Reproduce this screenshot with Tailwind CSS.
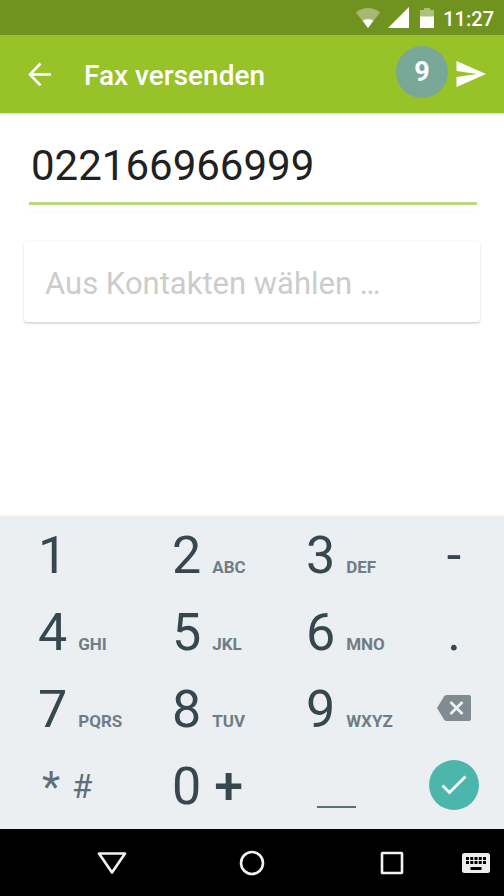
<!DOCTYPE html>
<html lang="de">
<head>
<meta charset="utf-8">
<meta name="viewport" content="width=device-width, initial-scale=1">
<title>Fax versenden</title>
<script src="https://cdn.jsdelivr.net/npm/@tailwindcss/browser@4"></script>
</head>
<body class="flex min-h-screen flex-col bg-white font-['Roboto',sans-serif]">
<div class="flex h-[35px] items-center justify-end bg-[#70921f] pr-[10px] text-white">
  <svg class="mr-2 h-5 w-6" viewBox="0 0 24 20" role="img" aria-label="WLAN"><path d="M12 20 0 4.500Q5 0 12 0T24 4.500Z" fill="#a5b973"/><path d="M12 20 6.500 12.500Q12 9.500 17.500 12.500Z" fill="#fff"/></svg>
  <svg class="mr-[11px] h-[21px] w-[21px]" viewBox="0 0 21 21" role="img" aria-label="Mobilfunk"><path d="M21 0V21H0Z" fill="#fff"/></svg>
  <svg class="mr-[9px] h-5 w-[14px]" viewBox="0 0 14 20" role="img" aria-label="Akku"><path d="M0 2H4V0H10V2H14V9H0Z" fill="#adc07e"/><path d="M0 8.500H14V20H0Z" fill="#fff"/></svg>
  <span class="pt-[3px] text-[20px] leading-6 font-medium">11:27</span>
</div>
<header class="flex h-[78px] items-center bg-[#97c228] pr-[18px] pl-7 text-white shadow-[0_1px_2px_#00000033]">
  <button type="button" aria-label="Zurück" class="mr-8 shrink-0"><svg class="h-6 w-6" viewBox="0 0 24 24" fill="none" stroke="#fff" stroke-width="2.600"><path d="M23 12.500H2.500M12.500 1.500 2 12.500 12.500 23.500"/></svg></button>
  <h1 class="flex-1 pt-1 text-[28px] leading-8 font-medium">Fax versenden</h1>
  <span class="mr-2 mb-1 flex h-[52px] w-[52px] items-center justify-center rounded-full bg-[#79a898] text-[27px] leading-8 font-bold">9</span>
  <button type="button" aria-label="Senden"><svg class="h-[26px] w-[30px]" viewBox="0 0 30 26"><path d="M0.500 0 30 13 0.500 26V16L21 13 0.500 10Z" fill="#fff"/></svg></button>
</header>
<main class="flex-1 px-6 pt-5">
  <div class="mr-[3px] ml-[5px]">
    <input type="tel" aria-label="Faxnummer" value="022166966999" class="block h-[72px] w-full border-b-[3px] border-[#bdd880] pr-0 pb-1 pl-[2px] text-[42px] leading-[50px] text-[#212121] outline-none">
    <div class="mt-[6px] h-px bg-[#fafafa]"></div>
  </div>
  <button type="button" class="mt-[29px] block h-[81px] w-full rounded-[3px] bg-white pt-[5px] pl-[21px] text-left text-[31px] leading-9 text-[#cccccc] shadow-[0_2px_2px_#00000022,0_0_2px_#00000014]">Aus Kontakten wählen …</button>
</main>
<section aria-label="Ziffernblock" class="grid auto-rows-[77px] grid-cols-[134fr_134fr_134fr_102fr] bg-[#ebeff2] pb-1 text-[52px] leading-[77px] text-[#37474f] shadow-[0_-1px_2px_#00000018]">
  <button type="button" class="flex items-baseline gap-[11px] pl-[38px]">1</button>
  <button type="button" class="flex items-baseline gap-[11px] pl-[38px]">2<span class="text-[17px] leading-5 font-bold text-[#6f7e84]">ABC</span></button>
  <button type="button" class="flex items-baseline gap-[11px] pl-[38px]">3<span class="text-[17px] leading-5 font-bold text-[#6f7e84]">DEF</span></button>
  <button type="button" class="pl-[2px] text-center">-</button>
  <button type="button" class="flex items-baseline gap-[11px] pl-[38px]">4<span class="text-[17px] leading-5 font-bold text-[#6f7e84]">GHI</span></button>
  <button type="button" class="flex items-baseline gap-[11px] pl-[38px]">5<span class="text-[17px] leading-5 font-bold text-[#6f7e84]">JKL</span></button>
  <button type="button" class="flex items-baseline gap-[11px] pl-[38px]">6<span class="text-[17px] leading-5 font-bold text-[#6f7e84]">MNO</span></button>
  <button type="button" class="pl-[2px] text-center">.</button>
  <button type="button" class="flex items-baseline gap-[11px] pl-[38px]">7<span class="text-[17px] leading-5 font-bold text-[#6f7e84]">PQRS</span></button>
  <button type="button" class="flex items-baseline gap-[11px] pl-[38px]">8<span class="text-[17px] leading-5 font-bold text-[#6f7e84]">TUV</span></button>
  <button type="button" class="flex items-baseline gap-[11px] pl-[38px]">9<span class="text-[17px] leading-5 font-bold text-[#6f7e84]">WXYZ</span></button>
  <button type="button" aria-label="Löschen" class="flex items-center justify-center pb-[3px] pl-[2px]"><svg class="h-[26px] w-[34px]" viewBox="0 0 34 26"><path d="M9.500 0H32Q34 0 34 2V24Q34 26 32 26H9.500Q8 26 7 24.500L0 13 7 1.500Q8 0 9.500 0Z" fill="#808c90"/><path d="M13.500 7 25.500 19M25.500 7 13.500 19" stroke="#ebeff2" stroke-width="2.800"/></svg></button>
  <button type="button" class="flex items-center gap-3 pl-[42px] text-[33px] text-[#5f6f76]"><span class="text-[42px]">*</span><span>#</span></button>
  <button type="button" class="flex items-baseline gap-[13px] pl-[38px]">0<span class="font-medium">+</span></button>
  <button type="button" aria-label="Leerzeichen" class="flex items-end pb-[17px] pl-[49px]"><span class="h-[2px] w-[39px] bg-[#5f6f76]"></span></button>
  <button type="button" aria-label="Fertig" class="flex items-center justify-center pb-[3px] pl-[2px]"><span class="flex h-[50px] w-[50px] items-center justify-center rounded-full bg-[#4db6ac]"><svg class="h-5 w-[26px]" viewBox="0 0 26 20" fill="none" stroke="#fff" stroke-width="2.800"><path d="M1.500 10.500 8.500 17.500 24.500 1.500"/></svg></span></button>
</section>
<nav class="grid h-[67px] grid-cols-[42fr_140fr_140fr_140fr_28fr_14fr] items-center justify-items-center bg-black">
  <span></span>
  <button type="button" aria-label="Zurück"><svg class="h-[22px] w-[30px]" viewBox="0 0 30 22" fill="none" stroke="#f2f2f2" stroke-width="2.600" stroke-linejoin="round"><path d="M2 1.500H28L15 20.500Z"/></svg></button>
  <button type="button" aria-label="Startseite"><svg class="h-[26px] w-[26px]" viewBox="0 0 26 26" fill="none" stroke="#f2f2f2" stroke-width="2.600"><circle cx="13" cy="13" r="11"/></svg></button>
  <button type="button" aria-label="Übersicht"><svg class="h-6 w-6" viewBox="0 0 24 24" fill="none" stroke="#f2f2f2" stroke-width="2.600"><rect x="2" y="2" width="20" height="20" rx="0.500"/></svg></button>
  <button type="button" aria-label="Tastatur wählen"><svg class="h-5 w-7" viewBox="0 0 28 20"><rect width="28" height="20" rx="2.500" fill="#eee"/><path d="M4 5.500H24M4 9.500H24" stroke="#000" stroke-width="3" stroke-dasharray="3 1.250"/><path d="M8.500 15.500H19.500" stroke="#000" stroke-width="3"/></svg></button>
  <span></span>
</nav>
</body>
</html>
